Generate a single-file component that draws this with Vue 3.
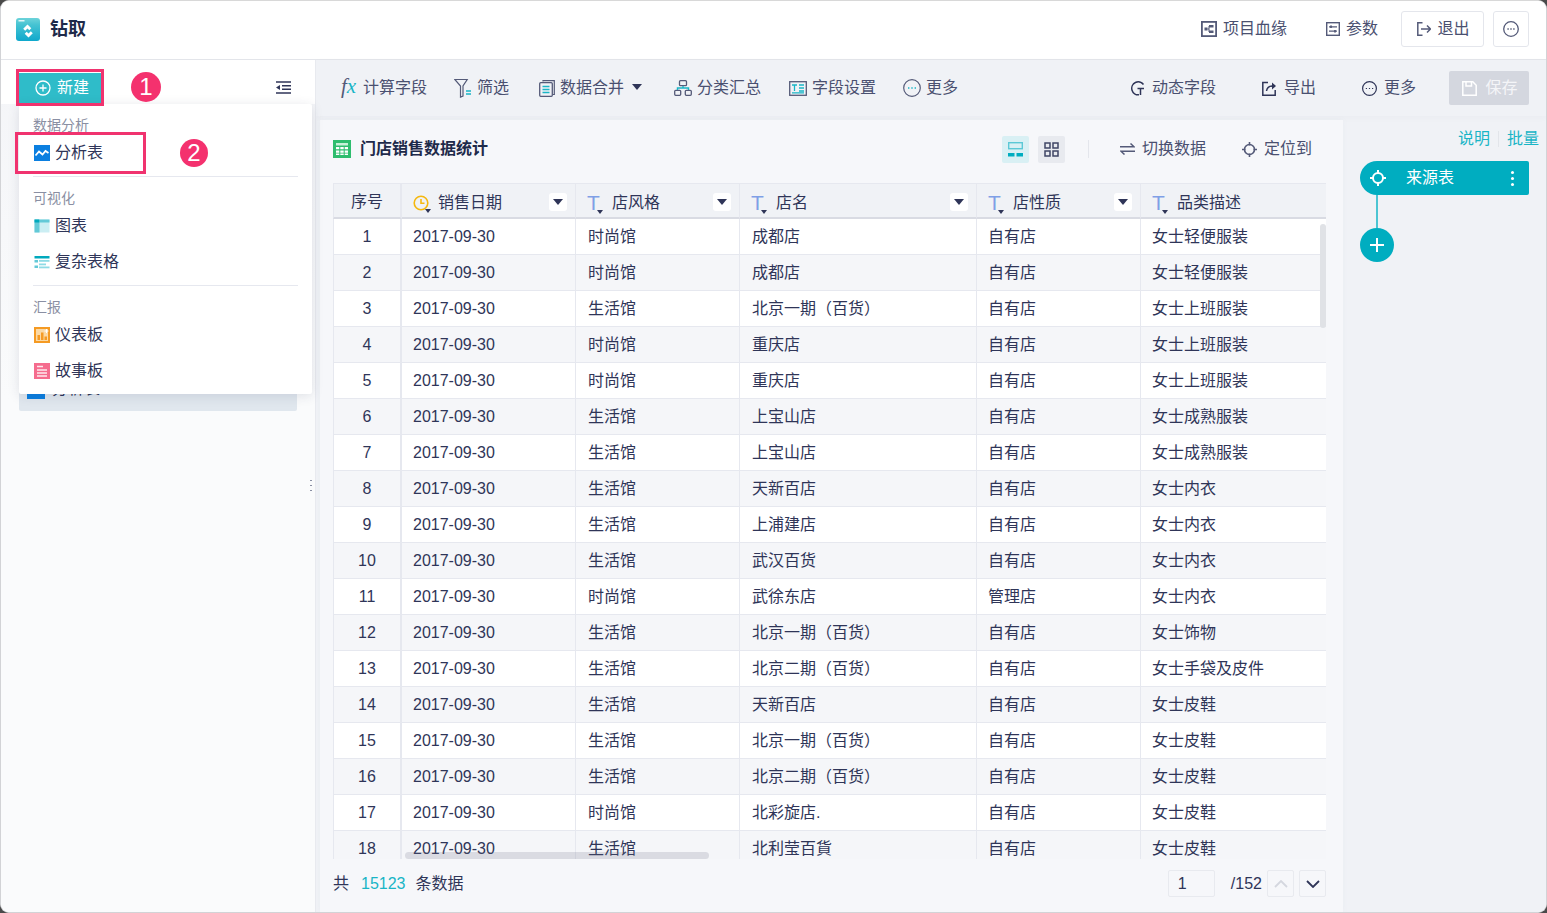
<script setup>
const rows = [
  ['时尚馆','成都店','自有店','女士轻便服装'],
  ['时尚馆','成都店','自有店','女士轻便服装'],
  ['生活馆','北京一期（百货）','自有店','女士上班服装'],
  ['时尚馆','重庆店','自有店','女士上班服装'],
  ['时尚馆','重庆店','自有店','女士上班服装'],
  ['生活馆','上宝山店','自有店','女士成熟服装'],
  ['生活馆','上宝山店','自有店','女士成熟服装'],
  ['生活馆','天新百店','自有店','女士内衣'],
  ['生活馆','上浦建店','自有店','女士内衣'],
  ['生活馆','武汉百货','自有店','女士内衣'],
  ['时尚馆','武徐东店','管理店','女士内衣'],
  ['生活馆','北京一期（百货）','自有店','女士饰物'],
  ['生活馆','北京二期（百货）','自有店','女士手袋及皮件'],
  ['生活馆','天新百店','自有店','女士皮鞋'],
  ['生活馆','北京一期（百货）','自有店','女士皮鞋'],
  ['生活馆','北京二期（百货）','自有店','女士皮鞋'],
  ['时尚馆','北彩旋店.','自有店','女士皮鞋'],
  ['生活馆','北利莹百貨','自有店','女士皮鞋'],
]
const textCols = ['店风格','店名','店性质']
</script>

<template>
  <div class="window">
    <header class="top">
      <svg class="logo" width="24" height="24" viewBox="0 0 24 24">
        <defs><linearGradient id="lg" x1="0" y1="0" x2="0" y2="1"><stop offset="0" stop-color="#6dd3da"/><stop offset=".3" stop-color="#45c3d2"/><stop offset="1" stop-color="#0fa8cc"/></linearGradient></defs>
        <rect width="24" height="23" rx="3" fill="url(#lg)"/>
        <rect x="2.500" y="2" width="6" height="1.500" fill="#dff7f8"/>
        <path d="M11.500 8l3.800 3.800-2 2-1.800-1.800-2.300 2.300-2-2zM12.500 21l-3.800-3.800 2-2 1.800 1.800 2.300-2.300 2 2z" fill="#fff" transform="translate(0 -1.500)"/>
      </svg>
      <span class="brand">钻取</span>
      <div class="top-right">
        <span class="tl">
          <svg width="16" height="16" viewBox="0 0 16 16" fill="none"><rect x=".9" y=".9" width="14.200" height="14.200" stroke="#545a78" stroke-width="1.800"/><rect x="3.500" y="6.500" width="3" height="3" fill="#545a78"/><rect x="8" y="4" width="4.500" height="2.500" fill="#545a78"/><rect x="8" y="9.500" width="4.500" height="2.500" fill="#545a78"/><path d="M6.500 8H8M8 5v6" stroke="#545a78"/></svg>
          项目血缘
        </span>
        <span class="tl tl2">
          <svg width="14" height="14" viewBox="0 0 14 14" fill="none"><rect x=".7" y=".7" width="12.600" height="12.600" stroke="#545a78" stroke-width="1.400"/><path d="M3 4.800h8M3 9.200h8" stroke="#545a78" stroke-width="1.200"/><path d="M5 3.600v2.400M9 8v2.400" stroke="#545a78" stroke-width="1.800"/></svg>
          参数
        </span>
        <button class="btn exit">
          <svg width="14" height="14" viewBox="0 0 14 14" fill="none" stroke="#545a78" stroke-width="1.500"><path d="M5.500.8H.8v12.400h4.700M4 7h9.500M10 3.500L13.500 7 10 10.500"/></svg>
          退出
        </button>
        <button class="btn more">
          <svg width="16" height="16" viewBox="0 0 16 16" fill="none"><circle cx="8" cy="8" r="7.300" stroke="#545a78" stroke-width="1.300"/><path d="M4.400 8h1.400M7.300 8h1.400M10.200 8h1.400" stroke="#545a78" stroke-width="1.400"/></svg>
        </button>
      </div>
    </header>

    <div class="body">
      <aside class="side">
        <div class="side-top">
          <button class="new">
            <svg width="16" height="16" viewBox="0 0 16 16" fill="none" stroke="#fff" stroke-width="1.300"><circle cx="8" cy="8" r="7"/><path d="M8 4.500v7M4.500 8h7"/></svg>
            新建
          </button>
          <svg class="fold" width="15" height="13" viewBox="0 0 15 13" fill="none" stroke="#2f3558" stroke-width="1.400"><path d="M0 1h15M6 4.700h9M6 8.300h9M0 12h15"/><path d="M0 6.500L4 4v5z" fill="#2f3558" stroke="none"/></svg>
        </div>
        <div class="side-item">
          <span class="side-ico"></span>分析表1
        </div>
        <i class="grip"></i>

        <div class="menu">
          <div class="m-head">数据分析</div>
          <div class="m-item">
            <svg width="16" height="16" viewBox="0 0 16 16"><rect width="16" height="16" fill="#0b7fe0"/><path d="M1.500 10.500L5 6.500l3.500 3 3-3.500 3 2" fill="none" stroke="#fff" stroke-width="1.800"/></svg>
            分析表
          </div>
          <div class="m-sep"></div>
          <div class="m-head">可视化</div>
          <div class="m-item">
            <svg width="16" height="16" viewBox="0 0 16 16"><rect x=".5" y="1.500" width="15" height="13" fill="#cbeef3"/><rect x=".5" y="1.500" width="5" height="13" fill="#63c9d7"/><rect x=".5" y="1.500" width="5" height="3" fill="#00a9bd"/><rect x="6" y="1.500" width="9.500" height="3" fill="#63c9d7"/></svg>
            图表
          </div>
          <div class="m-item">
            <svg width="16" height="16" viewBox="0 0 16 16"><rect x=".5" y="2" width="15" height="2.500" fill="#00a9bd"/><rect x=".5" y="6" width="3.500" height="2.500" fill="#63c9d7"/><rect x=".5" y="11.500" width="3.500" height="2.500" fill="#63c9d7"/><rect x="5" y="6" width="10.500" height="1.800" fill="#8fdbe5"/><rect x="5" y="9.500" width="7" height="1.800" fill="#8fdbe5"/><rect x="5" y="12.500" width="10.500" height="1.800" fill="#8fdbe5"/></svg>
            复杂表格
          </div>
          <div class="m-sep"></div>
          <div class="m-head">汇报</div>
          <div class="m-item">
            <svg width="16" height="16" viewBox="0 0 16 16"><rect width="16" height="16" fill="#f59a23"/><rect x="2" y="2" width="12" height="12" fill="#fbd9a5"/><path d="M3.500 13V8H6v5M7 13V5.500h2.500V13M10.500 13V9.500H13V13" fill="#f59a23"/><path d="M12.500 2v4M10.500 4h4" stroke="#fff"/></svg>
            仪表板
          </div>
          <div class="m-item">
            <svg width="16" height="16" viewBox="0 0 16 16"><rect width="16" height="16" fill="#f56c8e"/><path d="M3 3.500h6M3 7h10M3 10h10M3 13h10" stroke="#fff" stroke-opacity=".85" stroke-width="1.500"/></svg>
            故事板
          </div>
        </div>
      </aside>

      <main class="main">
        <div class="tools">
          <span class="ti"><em class="fx"><i>f</i><b>x</b></em>计算字段</span>
          <span class="ti g27">
            <svg width="18" height="20" viewBox="0 0 18 20" fill="none"><path d="M.8 1.500h12.400L9 8v10l-2.500 1V8z" stroke="#545a78" stroke-width="1.200"/><path d="M12 13h5M12 16h5" stroke="#19b5c6" stroke-width="1.500"/></svg>
            筛选
          </span>
          <span class="ti g30">
            <svg width="16" height="17" viewBox="0 0 16 17" fill="none"><path d="M4 1.500V.7h11.300v13.800h-1.500" stroke="#545a78" stroke-width="1.200"/><rect x=".7" y="2.700" width="12.600" height="13.600" rx="1" stroke="#545a78" stroke-width="1.300"/><path d="M3.500 6.500h7M3.500 9.500h7M3.500 12.500h7" stroke="#19b5c6" stroke-width="1.600"/></svg>
            数据合并
            <i class="caret big"></i>
          </span>
          <span class="ti g32">
            <svg width="18" height="16" viewBox="0 0 18 16" fill="none"><rect x="5.500" y=".7" width="7" height="5" rx="1" stroke="#545a78" stroke-width="1.300"/><rect x=".7" y="10.300" width="6" height="5" rx="1" stroke="#545a78" stroke-width="1.300"/><rect x="11.300" y="10.300" width="6" height="5" rx="1" stroke="#545a78" stroke-width="1.300"/><path d="M3.500 10V8h11v2M9 6v2" stroke="#19b5c6" stroke-width="1.400"/></svg>
            分类汇总
          </span>
          <span class="ti g28">
            <svg width="18" height="15" viewBox="0 0 18 15" fill="none"><rect x=".7" y=".7" width="16.600" height="13.600" stroke="#545a78" stroke-width="1.300"/><path d="M3 4h5M5.500 4v6M10 4h5M10 7h5M10 10h5M3 11.800h12" stroke="#19b5c6" stroke-width="1.300"/></svg>
            字段设置
          </span>
          <span class="ti g27">
            <svg width="18" height="18" viewBox="0 0 18 18" fill="none"><circle cx="9" cy="9" r="8.300" stroke="#545a78" stroke-width="1.200"/><path d="M5 9h1.400M8.300 9h1.400M11.600 9H13" stroke="#19b5c6" stroke-width="1.300"/></svg>
            更多
          </span>
          <div class="tools-right">
            <span class="ti">
              <svg width="15" height="15" viewBox="0 0 15 15" fill="none" stroke="#2f3558" stroke-width="1.500"><path d="M13.500 3.500A6.500 6.500 0 1 0 9 13.800"/><path d="M14 7.500H7.500M10.500 7.500V14"/></svg>
              <span class="lbl7">动态字段</span>
            </span>
            <span class="ti">
              <svg width="15" height="15" viewBox="0 0 15 15" fill="none" stroke="#2f3558" stroke-width="1.500"><path d="M6 1.500H.8v12.700h12.400V9"/><path d="M4.500 10c.5-3 2.500-5 6-5"/><path d="M10 1.500l4 3.500-4 3.500z" fill="#2f3558" stroke="none"/></svg>
              <span class="lbl7">导出</span>
            </span>
            <span class="ti">
              <svg width="15" height="15" viewBox="0 0 15 15" fill="none"><circle cx="7.500" cy="7.500" r="6.900" stroke="#2f3558" stroke-width="1.200"/><path d="M3.800 7.500h1.200M6.900 7.500h1.200M10 7.500h1.200" stroke="#2f3558" stroke-width="1.200"/></svg>
              <span class="lbl7">更多</span>
            </span>
            <button class="save">
              <svg width="15" height="15" viewBox="0 0 15 15" fill="none" stroke="#fff" stroke-width="1.500"><path d="M.8.800h10l3.400 3.400v10H.8z"/><path d="M4 1v4h5.500V1"/></svg>
              保存
            </button>
          </div>
        </div>

        <div class="work">
          <section class="card">
            <div class="card-head">
              <svg width="18" height="18" viewBox="0 0 18 18"><rect width="18" height="18" fill="#2ebd6e"/><rect x="3" y="3" width="12" height="2.500" fill="#c8f0d8"/><path d="M3 7h3.300v2.300H3zM7.300 7h3.400v2.300H7.300zM11.700 7H15v2.300h-3.300zM3 10.500h3.300v2.300H3zM7.300 10.500h3.400v2.300H7.300zM11.700 10.500H15v2.300h-3.300zM3 13.500h3.300V15H3zM7.300 13.500h3.400V15H7.300zM11.700 13.500H15V15h-3.300z" fill="#fff"/></svg>
              <span class="title">门店销售数据统计</span>
              <div class="card-actions">
                <span class="view on"><svg width="15" height="15" viewBox="0 0 15 15" fill="none"><rect x=".7" y=".7" width="13.600" height="6" stroke="#5cc8d6" stroke-width="1.400"/><rect y="11" width="6.500" height="3.500" fill="#00adc0"/><rect x="8.500" y="11" width="6.500" height="3.500" fill="#00adc0"/></svg></span>
                <span class="view"><svg width="15" height="15" viewBox="0 0 15 15" fill="none" stroke="#3f4566" stroke-width="1.500"><rect x="1" y="1" width="5" height="5"/><rect x="9" y="1" width="5" height="5"/><rect x="1" y="9" width="5" height="5"/><rect x="9" y="9" width="5" height="5"/></svg></span>
                <i class="vsep"></i>
                <span class="ca">
                  <svg width="15" height="12" viewBox="0 0 15 12" fill="none" stroke="#545a78" stroke-width="1.500"><path d="M0 3.800h14L10.500 .5M15 8.200H1L4.500 11.500"/></svg>
                  切换数据
                </span>
                <span class="ca ca2">
                  <svg width="15" height="15" viewBox="0 0 15 15" fill="none" stroke="#545a78" stroke-width="1.600"><circle cx="7.500" cy="7.500" r="5"/><path d="M7.500 0v3.500M7.500 11.500V15M0 7.500h3.500M11.500 7.500H15"/></svg>
                  定位到
                </span>
              </div>
            </div>

            <div class="table-wrap">
              <table class="grid">
                <colgroup>
                  <col class="c1"><col class="c2"><col class="c3"><col class="c4"><col class="c5"><col class="c6">
                </colgroup>
                <thead>
                  <tr>
                    <th class="seq">序号</th>
                    <th>
                      <div class="th">
                        <span class="ty">
                          <svg width="16" height="16" viewBox="0 0 16 16" fill="none" stroke="#f5b80f" stroke-width="1.600"><circle cx="8" cy="8" r="6.800"/><path d="M8 4v4.300h3.500"/></svg>
                          <i class="caret tiny"></i>
                        </span>
                        销售日期
                        <span class="dd"><i class="caret"></i></span>
                      </div>
                    </th>
                    <th v-for="c in textCols" :key="c">
                      <div class="th">
                        <span class="ty t">T<i class="caret tiny"></i></span>
                        {{ c }}
                        <span class="dd"><i class="caret"></i></span>
                      </div>
                    </th>
                    <th>
                      <div class="th">
                        <span class="ty t">T<i class="caret tiny"></i></span>
                        品类描述
                      </div>
                    </th>
                  </tr>
                </thead>
                <tbody>
                  <tr v-for="(r, i) in rows" :key="i">
                    <td class="seq">{{ i + 1 }}</td>
                    <td>2017-09-30</td>
                    <td v-for="(v, j) in r" :key="j">{{ v }}</td>
                  </tr>
                </tbody>
              </table>
              <i class="sb-v"></i>
              <i class="sb-h"></i>
            </div>

            <div class="foot">
              <span>共</span><span class="num">15123</span><span>条数据</span>
              <div class="pager">
                <span class="page-in">1</span>
                <span class="page-t">/152</span>
                <span class="pg"><svg width="14" height="8" viewBox="0 0 14 8" fill="none" stroke="#d4d7df" stroke-width="1.800"><path d="M1 7l6-6 6 6"/></svg></span>
                <span class="pg"><svg width="14" height="8" viewBox="0 0 14 8" fill="none" stroke="#2f3558" stroke-width="1.800"><path d="M1 1l6 6 6-6"/></svg></span>
              </div>
            </div>
          </section>

          <aside class="flow">
            <div class="links"><span>说明</span><i></i><span>批量</span></div>
            <div class="node">
              <svg width="16" height="16" viewBox="0 0 16 16" fill="none" stroke="#fff" stroke-width="2"><circle cx="8" cy="8" r="5"/><path d="M8 0v3.500M8 12.500V16M0 8h3.500M12.500 8H16"/></svg>
              <span class="node-t">来源表</span>
              <span class="dots"><i></i><i></i><i></i></span>
            </div>
            <i class="wire"></i>
            <div class="plus"><svg width="14" height="14" viewBox="0 0 14 14" stroke="#fff" stroke-width="2"><path d="M7 0v14M0 7h14"/></svg></div>
          </aside>
        </div>
      </main>
    </div>

    <i class="mark m1"></i>
    <i class="mark m2"></i>
    <b class="badge b1">1</b>
    <b class="badge b2">2</b>
  </div>
</template>

<style>
html, body { margin: 0; background: #4a4a4a; overflow: hidden; }
</style>

<style scoped>
* { box-sizing: border-box; }
i, em { font-style: normal; }
.window {
  position: relative; width: 1547px; height: 913px; display: flex; flex-direction: column;
  background: #fff; border: 1px solid #d2d3d6; border-top-color: #d8d8d8; border-radius: 9px; overflow: hidden;
  font-family: "Liberation Sans", "Noto Sans CJK SC", sans-serif; font-size: 16px; line-height: 22px; color: #2f3558;
}
.top { height: 59px; flex: none; display: flex; align-items: center; padding: 0 0 2px 15px; border-bottom: 1px solid #e3e5ea; background: #fff; }
.logo { flex: none; margin-top: 1px; }
.brand { margin-left: 10px; font-size: 18px; font-weight: 700; color: #1e2a4a; }
.top-right { margin-left: auto; display: flex; align-items: center; padding-right: 17px; }
.tl { display: flex; align-items: center; gap: 6px; color: #4a5070; margin-right: 39px; }
.tl2 { margin-right: 23px; }
.btn { height: 36px; display: flex; align-items: center; justify-content: center; gap: 6px; background: #fff; border: 1px solid #e4e6ec; border-radius: 3px; font: inherit; color: #4a5070; padding: 0; }
.exit { width: 83px; padding-left: 2px; }
.more { width: 36px; margin-left: 9px; }

.body { flex: 1; display: flex; min-height: 0; }
.side { position: relative; width: 315px; flex: none; background: linear-gradient(#f4f5f8, #fafbfc 40%, #fafbfc); border-right: 1px solid #e8eaef; }
.side-top { height: 44px; padding: 12px 24px 0 18px; display: flex; justify-content: space-between; align-items: center; background: #fff; }
.new { width: 82px; height: 31px; display: flex; align-items: center; justify-content: center; gap: 6px; border: 0; padding: 0 0 0 4px; background: #2fbcc9; color: #fff; font: inherit; }
.fold { margin-top: -2px; }
.side-item { margin: 276px 18px 0 18px; height: 31px; background: #e0e7ee; border-radius: 2px; display: flex; align-items: flex-end; padding: 0 8px 12px; gap: 7px; overflow: hidden; line-height: 20px; }
.side-ico { width: 18px; height: 18px; background: #0b7fe0; flex: none; }
.grip { position: absolute; right: 3px; top: 418px; width: 2px; height: 14px; background: radial-gradient(circle, #8a8fa3 1px, transparent 1px) 0 0 / 2px 5px; }
.menu { position: absolute; left: 18px; top: 44px; width: 293px; height: 290px; background: #fff; border-radius: 2px; box-shadow: 0 2px 12px rgba(40, 50, 80, .13); padding: 0 14px; }
.m-head { font-size: 14px; color: #8a8fa3; line-height: 20px; margin-top: 11px; }
.m-item { display: flex; align-items: center; gap: 5px; height: 36px; color: #2f3558; margin-left: 1px; }
.m-item svg { flex: none; }
.m-sep { height: 1px; background: #e6e8ef; margin-top: 5px; }

.main { flex: 1; min-width: 0; display: flex; flex-direction: column; background: #f0f2f6; }
.tools { height: 56px; flex: none; display: flex; align-items: center; padding: 0 17px 0 25px; color: #4a5070; box-shadow: 0 2px 6px rgba(60, 70, 100, .03); }
.ti { display: flex; align-items: center; gap: 5px; white-space: nowrap; }
.g27 { margin-left: 27px; }
.g28 { margin-left: 28px; }
.g30 { margin-left: 30px; }
.g32 { margin-left: 32px; }
.fx { font-family: "Liberation Serif", serif; font-size: 21px; width: 17px; display: inline-flex; line-height: 1; margin-bottom: 3px; }
.fx i { font-style: italic; color: #545a78; }
.fx b { font-style: italic; font-weight: 400; color: #19b5c6; }
.caret { display: inline-block; width: 0; height: 0; border-left: 5px solid transparent; border-right: 5px solid transparent; border-top: 6px solid #2f3558; }
.caret.big { margin-left: 3px; margin-top: -2px; }
.caret.tiny { position: absolute; right: -2px; bottom: -2px; border-left-width: 3px; border-right-width: 3px; border-top-width: 4px; }
.tools-right { margin-left: auto; display: flex; align-items: center; gap: 46px; }
.lbl7 { margin-left: 2px; }
.save { width: 80px; height: 34px; margin-left: -13px; display: flex; align-items: center; justify-content: center; gap: 8px; background: #d4d7df; color: #f4f5f8; border: 0; padding: 0 0 0 2px; border-radius: 2px; font: inherit; }

.work { flex: 1; display: flex; min-height: 0; }
.card { width: 1023px; margin-left: 4px; margin-top: 4px; background: #f6f7fa; padding: 0 17px 0 13px; display: flex; flex-direction: column; box-shadow: 0 0 6px rgba(120, 130, 160, .05); }
.card-head { height: 63px; flex: none; display: flex; align-items: center; padding-bottom: 5px; }
.title { margin-left: 9px; font-weight: 700; color: #1e2a4a; }
.card-actions { margin-left: auto; display: flex; align-items: center; padding-right: 14px; color: #4a5070; }
.view { width: 27px; height: 27px; display: flex; align-items: center; justify-content: center; background: #e8eaef; border-radius: 2px; margin-left: 9px; }
.view.on { background: #d9f0f4; }
.vsep { width: 1px; height: 18px; background: #e4e6ec; margin: 0 31px 0 23px; }
.ca { display: flex; align-items: center; gap: 7px; }
.ca2 { margin-left: 36px; }

.table-wrap { position: relative; height: 676px; flex: none; overflow: hidden; }
.grid { width: 993px; table-layout: fixed; border-collapse: separate; border-spacing: 0; }
.c1 { width: 69px; } .c2 { width: 174px; } .c3 { width: 164px; } .c4 { width: 237px; } .c5 { width: 164px; } .c6 { width: 185px; }
th, td { padding: 0 0 0 11px; height: 36px; text-align: left; font-weight: 400; white-space: nowrap; overflow: hidden; border-right: 1px solid #e6e8ef; border-bottom: 1px solid #e6e8ef; }
td:nth-child(3), td:nth-child(4) { padding-left: 12px; }
th { background: #f0f2f6; border-top: 1px solid #e6e8ef; border-bottom: 2px solid #d9dbe3; }
th:last-child, td:last-child { border-right: 0; }
tbody tr:nth-child(odd) td { background: #fff; }
tbody tr:nth-child(even) td { background: #f5f6f9; }
.seq { text-align: center; padding: 0; border-left: 1px solid #e6e8ef; border-right: 2px solid #e6e8ef; }
th.seq { padding-top: 3px; }
.th { display: flex; align-items: center; gap: 9px; padding-right: 8px; margin-top: 4px; }
.ty { position: relative; width: 16px; height: 16px; flex: none; display: block; }
.ty svg { display: block; }
.ty.t { color: #7f9fe6; font-size: 21px; line-height: 16px; }
.ty.t .caret.tiny { right: 0; bottom: -3px; }
.dd { margin-left: auto; margin-bottom: 2px; width: 18px; height: 18px; background: #fff; border-radius: 3px; display: flex; align-items: center; justify-content: center; }
.sb-v { position: absolute; right: 0; top: 41px; width: 6px; height: 104px; background: #e0e2e6; border-radius: 3px; }
.sb-h { position: absolute; left: 72px; bottom: 0; width: 304px; height: 7px; background: rgba(110, 115, 135, .2); border-radius: 4px; }

.foot { flex: 1; display: flex; align-items: center; gap: 11px; padding-bottom: 4px; color: #2f3558; }
.num { color: #19b5c6; margin: 0 -1px 0 1px; }
.pager { margin-left: auto; display: flex; align-items: center; }
.page-in { width: 47px; height: 27px; background: #f6f7fa; border: 1px solid #e8eaef; border-radius: 2px; padding-left: 9px; line-height: 25px; }
.page-t { margin: 0 5px 0 16px; }
.pg { width: 27px; height: 27px; border: 1px solid #e8eaef; border-radius: 2px; display: flex; align-items: center; justify-content: center; }
.pg + .pg { margin-left: 5px; }

.flow { flex: 1; position: relative; padding: 12px 17px 0 17px; display: flex; flex-direction: column; align-items: flex-start; }
.links { align-self: flex-end; display: flex; align-items: center; color: #19b5c6; margin-right: -10px; height: 22px; }
.links i { width: 1px; height: 16px; background: #e2e5ea; margin: 0 8px; }
.node { margin-top: 11px; width: 169px; height: 34px; background: #00adc0; border-radius: 17px 2px 2px 17px; display: flex; align-items: center; padding-left: 10px; color: #fff; }
.node-t { margin-left: 20px; }
.dots { margin-left: auto; margin-right: 15px; display: flex; flex-direction: column; gap: 3px; }
.dots i { width: 3px; height: 3px; background: #fff; border-radius: 50%; }
.wire { width: 2px; height: 33px; background: #4cc5d3; margin-left: 16px; }
.plus { width: 34px; height: 34px; border-radius: 50%; background: #00adc0; display: flex; align-items: center; justify-content: center; }

.mark { position: absolute; border: 3px solid #f0336f; pointer-events: none; }
.m1 { left: 15px; top: 68px; width: 88px; height: 37px; }
.m2 { left: 14px; top: 131px; width: 131px; height: 42px; }
.badge { position: absolute; border-radius: 50%; background: #f4316e; color: #fff; font-weight: 400; display: flex; align-items: center; justify-content: center; font-size: 24px; }
.b1 { left: 130px; top: 71px; width: 30px; height: 30px; }
.b2 { left: 179px; top: 138px; width: 28px; height: 28px; }
</style>
